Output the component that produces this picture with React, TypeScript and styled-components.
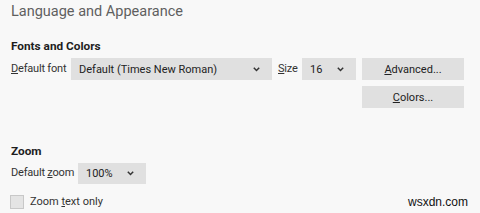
import React from "react";
import styled, { createGlobalStyle } from "styled-components";

const Global = createGlobalStyle`
  html, body { margin: 0; padding: 0; background: #f8f8f8; }
  body { font-family: Roboto, "Open Sans", sans-serif; color: #2b2b2b; }
`;

const Page = styled.div`
  position: relative;
  width: 480px;
  height: 213px;
  box-sizing: border-box;
  padding: 0 0 0 11px;
  overflow: hidden;
`;

const Title = styled.h1`
  margin: 0;
  padding-top: 1px;
  font-size: 14.5px;
  line-height: 22px;
  font-weight: 400;
  color: #5f5f5f;
`;

const Heading = styled.h2<{ $top: number }>`
  margin: ${(p) => p.$top}px 0 0 0;
  font-size: 11.8px;
  line-height: 16px;
  font-weight: 700;
  color: #1e1e1e;
`;

const FontGrid = styled.div`
  display: grid;
  grid-template-columns: 60px 201px 30px 54px 108px;
  row-gap: 6px;
  margin-top: 4px;
`;

const Label = styled.span<{ $pad?: number }>`
  font-size: 11px;
  letter-spacing: -0.2px;
  line-height: 22px;
  color: #333;
  padding-left: ${(p) => p.$pad ?? 0}px;
  white-space: nowrap;
`;

const Select = styled.div<{ $h?: number }>`
  display: flex;
  align-items: center;
  justify-content: space-between;
  height: ${(p) => p.$h ?? 22}px;
  box-sizing: border-box;
  padding: 0 12px 0 8px;
  background: #e0e0e0;
  font-size: 11px;
  color: #222;
  white-space: nowrap;
`;

const Button = styled.div<{ $col: number }>`
  grid-column: ${(p) => p.$col};
  margin-left: 6px;
  height: 22px;
  display: flex;
  align-items: center;
  justify-content: center;
  background: #e0e0e0;
  font-size: 11px;
  color: #222;
`;

const ZoomRow = styled.div`
  display: grid;
  grid-template-columns: 67px 68px;
  align-items: center;
  margin-top: 3px;
`;

const CheckRow = styled.label`
  display: flex;
  align-items: center;
  gap: 6px;
  margin-top: 10px;
  font-size: 11px;
  line-height: 16px;
  color: #333;
`;

const Box = styled.span`
  width: 14px;
  height: 14px;
  box-sizing: border-box;
  background: #e4e4e4;
  border: 1px solid #c8c8c8;
  margin-left: -1px;
`;

const Watermark = styled.div`
  position: absolute;
  right: 12px;
  bottom: 4px;
  font-family: "Liberation Sans", Arial, sans-serif;
  font-size: 12px;
  color: #111;
`;

const Chevron = () => (
  <svg width="7" height="5" viewBox="0 0 7 5">
    <path d="M0.8 0.8 L3.5 3.5 L6.2 0.8" fill="none" stroke="#333" strokeWidth="1.5" />
  </svg>
);

export default function App() {
  return (
    <>
      <Global />
      <Page>
        <Title>Language and Appearance</Title>
        <Heading $top={15}>Fonts and Colors</Heading>
        <FontGrid>
          <Label>
            <u>D</u>efault font
          </Label>
          <Select>
            <span>Default (Times New Roman)</span>
            <Chevron />
          </Select>
          <Label $pad={6}>
            <u>S</u>ize
          </Label>
          <Select>
            <span>16</span>
            <Chevron />
          </Select>
          <Button $col={5}>
            <span>
              <u>A</u>dvanced...
            </span>
          </Button>
          <Button $col={5}>
            <span>
              <u>C</u>olors...
            </span>
          </Button>
        </FontGrid>
        <Heading $top={35}>Zoom</Heading>
        <ZoomRow>
          <Label>
            Default <u>z</u>oom
          </Label>
          <Select $h={21}>
            <span>100%</span>
            <Chevron />
          </Select>
        </ZoomRow>
        <CheckRow>
          <Box />
          <span>
            Zoom <u>t</u>ext only
          </span>
        </CheckRow>
        <Watermark>wsxdn.com</Watermark>
      </Page>
    </>
  );
}
